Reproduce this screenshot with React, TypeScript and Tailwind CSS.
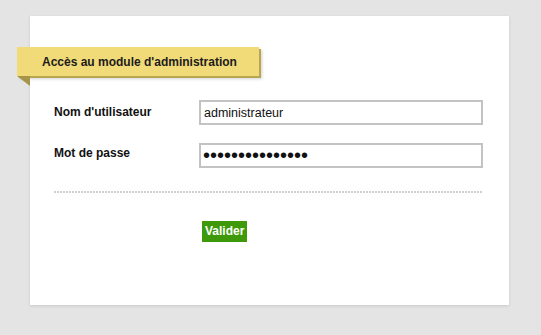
import React from 'react';

export default function App() {
  return (
    <div className="w-[541px] h-[335px] bg-[#e4e4e4] pt-[16px] pl-[30px] font-['Liberation_Sans',Arial,sans-serif]">
      <div className="w-[479px] h-[289px] bg-white shadow-[0_1px_3px_rgba(0,0,0,0.12)] flex flex-col">
        {/* Ribbon title */}
        <div className="relative mt-[31px] -ml-[13px] w-[242px] h-[29px] bg-[#f1da78] shadow-[2px_2px_0_#b9a650,3px_3px_3px_rgba(0,0,0,0.18)] flex items-center pl-[25px]">
          <span className="text-[12px] font-bold text-[#1c1c1c]">Accès au module d'administration</span>
          <div className="absolute left-0 top-[29px] w-0 h-0 border-t-[10px] border-t-[#a5954a] border-l-[13px] border-l-transparent" />
        </div>

        <form className="flex flex-col pl-[24px] pr-[26px] mt-[24px]">
          <div className="flex items-start">
            <label className="w-[145px] pt-[3px] text-[12px] font-bold text-[#111]">Nom d'utilisateur</label>
            <input
              type="text"
              defaultValue="administrateur"
              className="w-[284px] h-[25px] border-2 border-[#c3c3c3] px-[3px] text-[12.5px] text-[#111] outline-none"
            />
          </div>
          <div className="flex items-start mt-[18px]">
            <label className="w-[145px] pt-[1px] text-[12px] font-bold text-[#111]">Mot de passe</label>
            <input
              type="password"
              defaultValue="administrateur1"
              className="w-[284px] h-[25px] border-2 border-[#c3c3c3] px-[2px] text-[20px] leading-[21px] text-[#111] outline-none"
            />
          </div>

          <div className="mt-[23px] h-[2px] w-[429px] bg-[linear-gradient(to_right,#cfcfcf_2px,transparent_2px)] bg-[length:3px_2px]" />

          <div className="mt-[25px] pl-[148px]">
            <button
              type="button"
              className="h-[21px] px-[3px] bg-[#3e9a0b] text-white text-[12px] font-bold leading-[21px]"
            >
              Valider
            </button>
          </div>
        </form>
      </div>
    </div>
  );
}
